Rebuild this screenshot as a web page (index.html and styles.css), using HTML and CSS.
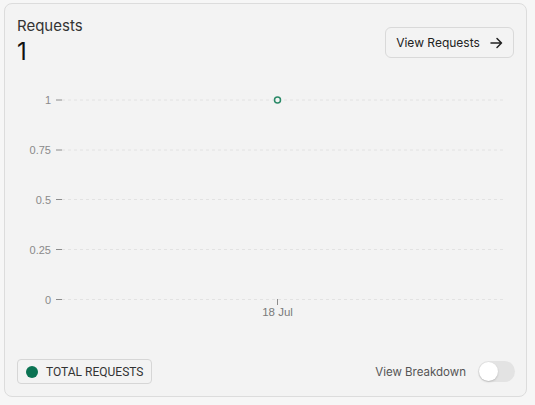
FILE: index.html
```html
<!DOCTYPE html>
<html lang="en">
<head>
<meta charset="utf-8">
<title>Requests</title>
<link rel="stylesheet" href="styles.css">
</head>
<body>
<div class="page">
  <section class="card">
    <header class="card-head">
      <div class="stat">
        <div class="stat-label">Requests</div>
        <div class="stat-value">1</div>
      </div>
      <button class="btn-outline" type="button">
        <span>View Requests</span>
        <svg class="btn-arrow" width="13" height="12" viewBox="0 0 13 12" aria-hidden="true">
          <path d="M1 6h10.5M7 1.5 11.5 6 7 10.5" fill="none" stroke="#222" stroke-width="1.5" stroke-linecap="round" stroke-linejoin="round"/>
        </svg>
      </button>
    </header>

    <svg class="chart" width="521" height="240" viewBox="5 85 521 240" aria-label="Requests over time">
      <g class="grid">
        <line x1="62" y1="100" x2="503" y2="100"/>
        <line x1="62" y1="150" x2="503" y2="150"/>
        <line x1="62" y1="199.5" x2="503" y2="199.5"/>
        <line x1="62" y1="249.5" x2="503" y2="249.5"/>
        <line x1="62" y1="299.5" x2="503" y2="299.5"/>
      </g>
      <g class="ticks">
        <line x1="56" y1="100" x2="62" y2="100"/>
        <line x1="56" y1="150" x2="62" y2="150"/>
        <line x1="56" y1="199.5" x2="62" y2="199.5"/>
        <line x1="56" y1="249.5" x2="62" y2="249.5"/>
        <line x1="56" y1="299.5" x2="62" y2="299.5"/>
        <line x1="277.5" y1="299" x2="277.5" y2="305"/>
      </g>
      <g class="y-labels">
        <text x="51" y="104">1</text>
        <text x="51" y="154">0.75</text>
        <text x="51" y="203.5">0.5</text>
        <text x="51" y="253.5">0.25</text>
        <text x="51" y="303.5">0</text>
      </g>
      <text class="x-label" x="277.5" y="316">18 Jul</text>
      <circle class="point" cx="277.5" cy="100" r="3"/>
    </svg>

    <footer class="card-foot">
      <button class="legend" type="button">
        <span class="legend-dot"></span>
        <span>TOTAL REQUESTS</span>
      </button>
      <label class="breakdown">
        <span>View Breakdown</span>
        <span class="switch"><span class="switch-knob"></span></span>
      </label>
    </footer>
  </section>
</div>
</body>
</html>
```

FILE: styles.css
```css
* {
  box-sizing: border-box;
}

html,
body {
  margin: 0;
  background: #f6f6f6;
}

body {
  font-family: Inter, "Noto Sans", sans-serif;
  color: #333;
}

.page {
  padding: 3px 9px 8px 4px;
}

.card {
  width: 523px;
  height: 394px;
  display: flex;
  flex-direction: column;
  background: #f3f3f3;
  border: 1px solid #dcdcdc;
  border-radius: 8px;
}

.card-head {
  height: 81px;
  display: flex;
  justify-content: space-between;
  align-items: flex-start;
  padding: 12px 12px 0 12px;
}

.stat-label {
  font-size: 15px;
  line-height: 20px;
  color: #333;
}

.stat-value {
  font-size: 24px;
  line-height: 30px;
  color: #111;
  margin-top: 1px;
}

.btn-outline {
  margin-top: 11px;
  height: 31px;
  width: 129px;
  display: flex;
  align-items: center;
  justify-content: center;
  gap: 10px;
  padding: 0 6px;
  font-family: inherit;
  font-size: 12px;
  white-space: nowrap;
  color: #222;
  background: #f3f3f3;
  border: 1px solid #d9d9d9;
  border-radius: 6px;
}

.btn-arrow {
  display: block;
  flex: none;
}

.chart {
  display: block;
}

.grid line {
  stroke: #e2e2e2;
  stroke-width: 1;
  stroke-dasharray: 3 3;
}

.ticks line {
  stroke: #8c8c8c;
  stroke-width: 1;
}

.y-labels text {
  font-family: "Liberation Sans", Arial, sans-serif;
  font-size: 11px;
  fill: #8a8a8a;
  text-anchor: end;
}

.x-label {
  font-family: "Liberation Sans", Arial, sans-serif;
  font-size: 11.5px;
  fill: #7a7a7a;
  text-anchor: middle;
}

.point {
  fill: #f3f3f3;
  stroke: #2b8a68;
  stroke-width: 1.5;
}

.card-foot {
  margin-top: auto;
  display: flex;
  justify-content: space-between;
  align-items: center;
  padding: 0 11px 12px 12px;
}

.legend {
  height: 25px;
  display: flex;
  align-items: center;
  gap: 8px;
  padding: 0 8px 0 8px;
  font-family: Roboto, "Liberation Sans", sans-serif;
  font-size: 12px;
  color: #333;
  background: #f3f3f3;
  border: 1px solid #d6d6d6;
  border-radius: 4px;
}

.legend-dot {
  width: 12px;
  height: 12px;
  border-radius: 50%;
  background: #0b7353;
}

.breakdown {
  display: flex;
  align-items: center;
  gap: 12px;
  font-size: 11.5px;
  color: #555;
}

.switch {
  width: 37px;
  height: 21px;
  border-radius: 11px;
  background: #e3e3e3;
  padding: 1px;
  display: flex;
  align-items: center;
}

.switch-knob {
  width: 19px;
  height: 19px;
  border-radius: 50%;
  background: #fff;
  box-shadow: 0 1px 2px rgba(0, 0, 0, 0.18);
}
```
